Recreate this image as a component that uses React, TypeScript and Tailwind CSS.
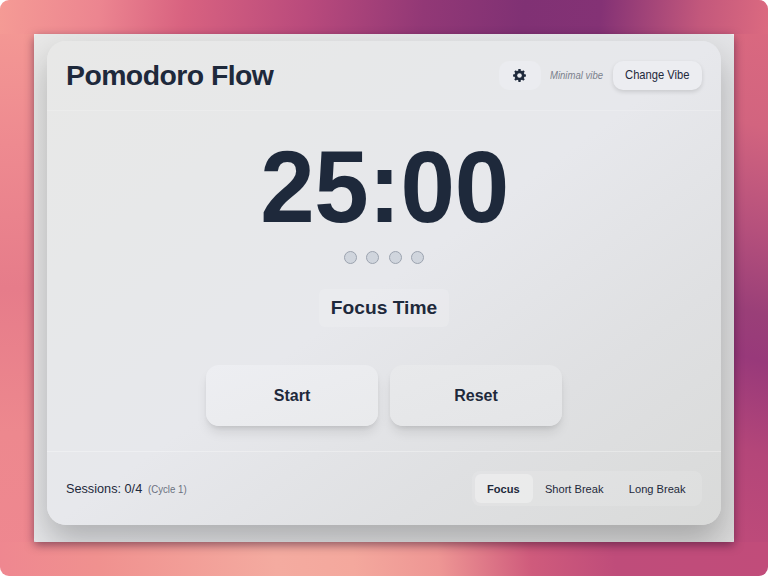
import React from "react";

const NAVY = "#1e293b";

function GearIcon() {
  return (
    <svg className="-ml-px" width="13" height="13" viewBox="-6.5 -6.5 13 13" fill={NAVY}>
      {[0, 45, 90, 135].map((a) => (
        <rect key={a} x="-1.2" y="-6.4" width="2.4" height="12.8" rx="0.4" transform={`rotate(${a})`} />
      ))}
      <circle r="5" />
      <circle r="2.3" fill="#ebecf0" />
    </svg>
  );
}

function Header() {
  return (
    <header className="flex h-[70px] shrink-0 items-center justify-between border-b border-white/20 pr-[19px] pl-[19px]">
      <h1 className="text-[28.4px] leading-[34px] font-bold tracking-[-0.55px]">Pomodoro Flow</h1>
      <div className="flex items-center">
        <button className="flex h-[29px] w-[42px] items-center justify-center rounded-[10px] bg-[#ebecf0]">
          <GearIcon />
        </button>
        <span className="ml-[9px] w-[54px] origin-left scale-x-[0.9] pt-[2px] text-[10.6px] whitespace-nowrap text-[#7b818c] italic">
          Minimal vibe
        </span>
        <button className="ml-[9px] h-[29px] w-[89px] rounded-[10px] bg-[#ecedf1] text-[11.9px] shadow-[0_2px_4px_rgba(0,0,0,0.13)]">
          <span className="inline-block scale-x-[0.94] pt-[2px]">Change Vibe</span>
        </button>
      </div>
    </header>
  );
}

function Timer() {
  return (
    <main className="flex grow flex-col items-center">
      <div className="mt-[25px] h-[102px] scale-x-[0.96] text-[102px] leading-[102px] font-bold tracking-[-0.4px] whitespace-nowrap">
        25:00
      </div>
      <div className="mt-[13px] flex gap-[9.4px]">
        {[1, 2, 3, 4].map((n) => (
          <span key={n} className="size-[13px] rounded-full border border-[#9ca3af] bg-[#d0d5dd]" />
        ))}
      </div>
      <div className="mt-[25px] flex h-[38px] w-[130px] items-center justify-center rounded-[6px] bg-white/15 pt-[2px] text-[19.2px] font-bold">
        Focus Time
      </div>
      <div className="mt-[38px] flex gap-3 text-[16px] font-bold">
        <button className="h-[61px] w-[172px] rounded-[13px] bg-linear-to-br from-[#edeef2] to-[#e9eaec] pt-[2px] shadow-[0_8px_12px_-2px_rgba(0,0,0,0.1),0_3px_5px_-2px_rgba(0,0,0,0.1)]">
          Start
        </button>
        <button className="h-[61px] w-[172px] rounded-[13px] bg-linear-to-br from-[#e8e9eb] to-[#e4e5e7] pt-[2px] shadow-[0_8px_12px_-2px_rgba(0,0,0,0.1),0_3px_5px_-2px_rgba(0,0,0,0.1)]">
          Reset
        </button>
      </div>
    </main>
  );
}

function Footer() {
  return (
    <footer className="flex h-[74px] shrink-0 items-center justify-between border-t border-white/30 pr-[19px] pl-[19px]">
      <div className="flex items-baseline pt-px whitespace-nowrap">
        <span className="w-[76px] origin-left scale-x-[0.94] text-[13.5px]">Sessions: 0/4</span>
        <span className="ml-[6px] origin-left scale-x-[0.93] text-[10.4px] text-[#6b7280]">(Cycle 1)</span>
      </div>
      <div className="flex h-[35px] w-[230px] items-center rounded-[8px] bg-white/12 p-[3px] text-[11.8px] whitespace-nowrap">
        <button className="h-[29px] w-[58px] rounded-[6px] bg-white/30 font-bold">
          <span className="inline-block scale-x-[0.94] pt-[2px] pr-px">Focus</span>
        </button>
        <button className="h-[29px] w-[84px]">
          <span className="inline-block scale-x-[0.94] pt-[2px] pr-px">Short Break</span>
        </button>
        <button className="h-[29px] w-[82px]">
          <span className="inline-block scale-x-[0.94] pt-[2px] pr-px">Long Break</span>
        </button>
      </div>
    </footer>
  );
}

export default function App() {
  return (
    <div className="h-[576px] w-[768px] bg-white font-['Liberation_Sans',Arial,sans-serif] text-[#1e293b]">
      <div className="h-full overflow-hidden rounded-[9px] bg-[linear-gradient(96deg,#f59b95_0%,#ec8590_13%,#d86280_24%,#b94a7c_40%,#923876_55%,#803174_68%,#843275_78%,#c3587c_91%,#dc6a80_100%),linear-gradient(84deg,#ef8790_0%,#f0918f_13%,#f4aba0_36%,#f4a89d_46%,#ee9694_57%,#cf5b7c_69%,#bf4c7a_80%,#c14c7a_100%),linear-gradient(180deg,#f59b95_0%,#ee8a90_25%,#e67c8a_50%,#ed888e_75%,#ef8790_100%),linear-gradient(196deg,#dc6a80_0%,#d2647f_22%,#b5507c_40%,#9a3f78_54%,#98397a_62%,#b44679_78%,#c14c7a_100%)] bg-[size:100%_34px,100%_34px,34px_100%,34px_100%] bg-[position:top,bottom,left,right] bg-no-repeat p-[34px]">
        <div className="h-[508px] w-[700px] rounded-[4px] shadow-[0_3px_10px_rgba(40,10,40,0.5)]">
          <div className="h-full overflow-hidden rounded-[4px] bg-[linear-gradient(135deg,#e8e8e7_0%,#e5e6e9_48%,#dadada_100%)] px-[13px] pt-[6.5px]">
            <div className="flex h-[484.5px] flex-col rounded-[19px] bg-[linear-gradient(144deg,#e8e8e7_0%,#e7e8e9_25%,#e7e8ec_50%,#dfe0e2_75%,#d9dad9_100%)] shadow-[0_16px_32px_rgba(0,0,0,0.24)]">
              <Header />
              <Timer />
              <Footer />
            </div>
          </div>
        </div>
      </div>
    </div>
  );
}
